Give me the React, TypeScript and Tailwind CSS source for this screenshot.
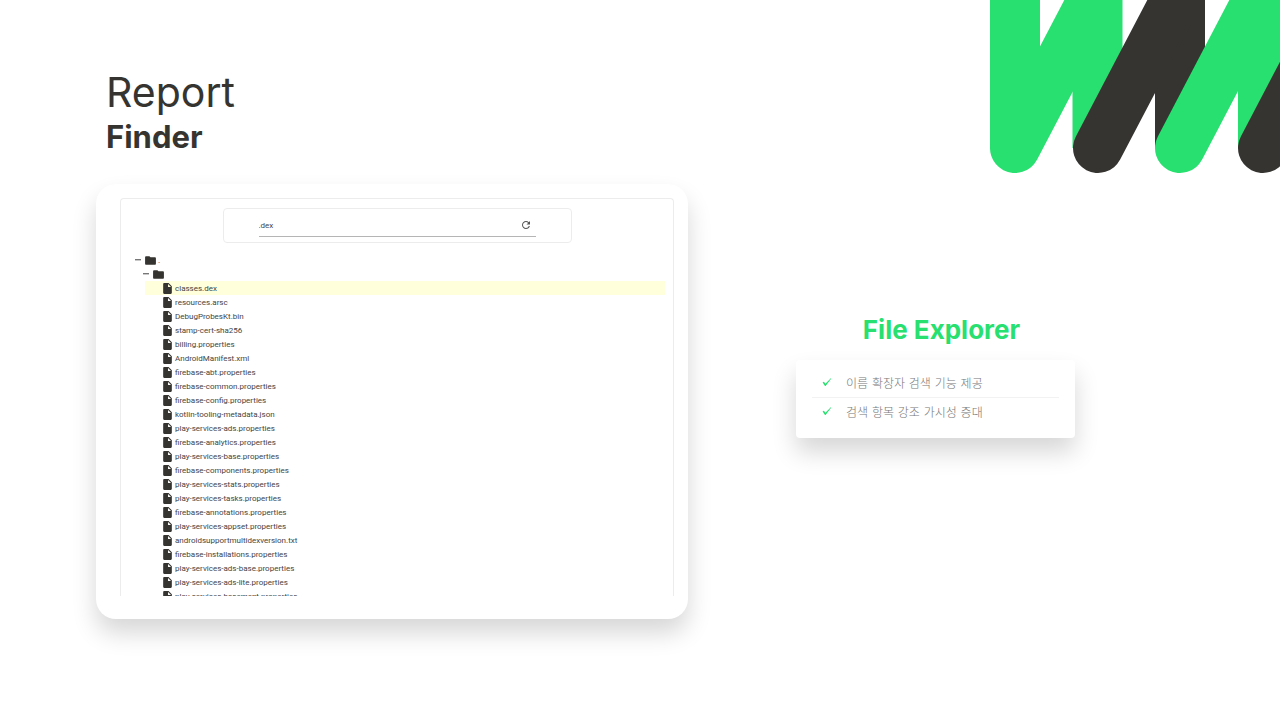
import { MdFolder, MdInsertDriveFile, MdRefresh } from "react-icons/md";

const files = [
  "classes.dex",
  "resources.arsc",
  "DebugProbesKt.bin",
  "stamp-cert-sha256",
  "billing.properties",
  "AndroidManifest.xml",
  "firebase-abt.properties",
  "firebase-common.properties",
  "firebase-config.properties",
  "kotlin-tooling-metadata.json",
  "play-services-ads.properties",
  "firebase-analytics.properties",
  "play-services-base.properties",
  "firebase-components.properties",
  "play-services-stats.properties",
  "play-services-tasks.properties",
  "firebase-annotations.properties",
  "play-services-appset.properties",
  "androidsupportmultidexversion.txt",
  "firebase-installations.properties",
  "play-services-ads-base.properties",
  "play-services-ads-lite.properties",
  "play-services-basement.properties",
];

const features = ["이름 확장자 검색 기능 제공", "검색 항목 강조 가시성 증대"];

function Logo() {
  return (
    <svg
      className="absolute top-0 right-0 h-[180px] w-[290px]"
      viewBox="0 0 290 180"
      fill="none"
      strokeWidth="50"
      aria-hidden="true"
    >
      <path d="M25 -60V148" stroke="#28e070" />
      <path d="M25 148L134 -60" stroke="#28e070" strokeLinecap="round" />
      <path d="M107.5 -60V148" stroke="#28e070" />
      <path d="M190 -60V148" stroke="#363430" />
      <path d="M108 148L217 -60" stroke="#363430" strokeLinecap="round" />
      <path d="M273 -60V148" stroke="#28e070" />
      <path d="M190 148L299 -60" stroke="#28e070" strokeLinecap="round" />
      <path d="M273 148L382 -60" stroke="#363430" strokeLinecap="round" />
    </svg>
  );
}

function Tick() {
  return (
    <svg className="h-[10px] w-[10px] shrink-0" viewBox="0 0 10 10" aria-hidden="true">
      <path d="M0.6 4.4L1.9 3.7L3.4 5.7L8.8 0.3L9.3 0.6L3.6 7.9H3Z" fill="#28e070" />
    </svg>
  );
}

function Minus() {
  return (
    <svg className="h-[8px] w-[8px]" viewBox="0 0 8 8" aria-hidden="true">
      <path d="M2 3H8V4.4H2Z" fill="#777" />
    </svg>
  );
}

function FileTree() {
  return (
    <div className="h-[398px] overflow-hidden rounded-t-sm border border-b-0 border-[#ececec] px-2 pt-[9px] text-[8px] leading-[14px] text-[#444]">
      <div className="mx-auto mb-[10px] flex h-[35px] w-[349px] items-end rounded-sm border border-[#ececec] px-[35px] pb-[5px]">
        <div className="flex h-[23px] w-full items-center border-b border-[#b5b5b5]">
          <input
            aria-label="Search files"
            defaultValue=".dex"
            className="min-w-0 flex-1 bg-transparent pt-[2px] outline-none"
          />
          <button aria-label="Refresh" className="mr-1 text-[#555]">
            <MdRefresh size={12} />
          </button>
        </div>
      </div>
      <div className="flex h-[14px] items-center pl-1">
        <button aria-label="Collapse root">
          <Minus />
        </button>
        <MdFolder size={13} className="ml-[3px] text-[#363430]" />
        <span className="ml-[1px] pt-[2px]">.</span>
      </div>
      <div className="flex h-[14px] items-center pl-3">
        <button aria-label="Collapse folder">
          <Minus />
        </button>
        <MdFolder size={13} className="ml-[3px] text-[#363430]" />
      </div>
      <ul className="ml-4">
        {files.map((name, i) => (
          <li
            key={name}
            className={
              i === 0
                ? "flex h-[14px] items-center gap-[1px] bg-[#ffffdc] pl-4"
                : "flex h-[14px] items-center gap-[1px] pl-4"
            }
          >
            <MdInsertDriveFile size={13} className="shrink-0 text-[#363430]" />
            <span className="pt-[2px]">{name}</span>
          </li>
        ))}
      </ul>
    </div>
  );
}

export default function App() {
  return (
    <div className="relative min-h-screen overflow-hidden bg-white font-['Inter','Noto_Sans_CJK_KR',sans-serif] text-[#363430]">
      <Logo />
      <header className="pt-16 pl-[106px]">
        <h1 className="text-[41px] leading-[56px] font-normal">Report</h1>
        <h2 className="text-[31px] leading-[34px] font-bold">Finder</h2>
      </header>
      <main className="mt-[30px] flex items-start px-24">
        <section className="w-[592px] rounded-[20px] bg-white pt-[14px] pr-[14px] pb-[23px] pl-6 font-['Roboto',sans-serif] shadow-[0_14px_24px_rgba(0,0,0,0.16)]">
          <FileTree />
        </section>
        <section className="mt-[128px] ml-[108px] w-[279px]">
          <h3 className="pl-3 text-center text-[26px] leading-9 font-bold text-[#28e070]">
            File Explorer
          </h3>
          <ul className="mt-3 rounded bg-white px-4 pt-2 pb-3 font-['DejaVu_Sans','Noto_Sans_CJK_KR',sans-serif] text-xs font-light text-[#777] shadow-[0_14px_24px_rgba(0,0,0,0.16)]">
            {features.map((text, i) => (
              <li
                key={text}
                className={
                  i === 0
                    ? "flex h-[30px] items-center gap-[14px] border-b border-[#f2f2f2] pl-[10px]"
                    : "flex h-[28px] items-center gap-[14px] pl-[10px]"
                }
              >
                <Tick />
                <span className="pt-[2px]">{text}</span>
              </li>
            ))}
          </ul>
        </section>
      </main>
    </div>
  );
}
